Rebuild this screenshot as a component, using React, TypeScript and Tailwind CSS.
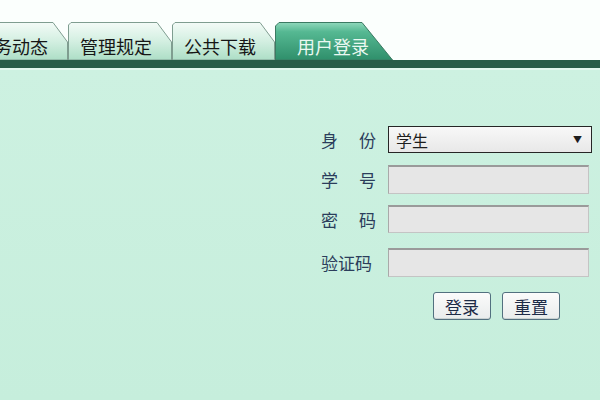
import React from 'react'

const cjk = '[font-family:"Noto_Sans_CJK_SC","Noto_Sans",sans-serif]'

function Tab({ label, width, active = false }: { label: string; width: number; active?: boolean }) {
  const h = 38
  const w = width
  // inactive tabs: cut top-right corner, active tab: long slope down to bar
  const points = active
    ? `0.5,${h} 0.5,4 4,0.5 ${w - 31},0.5 ${w - 0.5},${h}`
    : `0.5,${h} 0.5,3 3,0.5 ${w - 15},0.5 ${w - 0.5},20 ${w - 0.5},${h}`
  const id = active ? 'tabActive' : 'tabIdle'
  return (
    <div className={`relative h-[38px] shrink-0 ${active ? 'z-10' : ''}`} style={{ width: w }}>
      <svg className="absolute inset-0" width={w} height={h} viewBox={`0 0 ${w} ${h}`}>
        <defs>
          <linearGradient id={id} x1="0" y1="0" x2="0" y2="1">
            {active ? (
              <>
                <stop offset="0" stopColor="#8fd8bb" />
                <stop offset="0.25" stopColor="#55b892" />
                <stop offset="1" stopColor="#2f8f6b" />
              </>
            ) : (
              <>
                <stop offset="0" stopColor="#f3fbf7" />
                <stop offset="0.5" stopColor="#d3efe1" />
                <stop offset="1" stopColor="#addec6" />
              </>
            )}
          </linearGradient>
        </defs>
        <polygon points={points} fill={`url(#${id})`} stroke={active ? '#3b7a62' : '#7f9d90'} strokeWidth="1" />
      </svg>
      <span
        className={`relative flex h-full items-center pt-[9px] text-[18px] leading-none ${cjk} ${
          active ? 'pl-[22px] text-[#eaf8f1]' : 'pl-[12px] text-[#161616]'
        }`}
      >
        {label}
      </span>
    </div>
  )
}

function Field({ label, children, className = '' }: { label: React.ReactNode; children: React.ReactNode; className?: string }) {
  return (
    <div className={`flex items-center ${className}`}>
      <div className={`flex w-[55px] justify-between text-[17px] leading-none text-[#2b3d5b] ${cjk}`}>{label}</div>
      <div className="ml-[12px]">{children}</div>
    </div>
  )
}

function TextBox({ h }: { h: number }) {
  return (
    <div
      className="w-[201px] border border-[#c4c4c4] border-t-[2px] border-t-[#9a9a9a] border-l-[#a9a9a9] bg-[#e6e6e6]"
      style={{ height: h }}
    />
  )
}

function Btn({ children }: { children: React.ReactNode }) {
  return (
    <button
      className={`flex h-[28px] w-[58px] items-center justify-center rounded-[3px] border border-[#52707f] bg-gradient-to-b from-[#fbfbfb] to-[#e9ecec] text-[17px] leading-none text-[#1d2b47] shadow-[inset_0_-1px_0_#c9d1d1] ${cjk}`}
    >
      {children}
    </button>
  )
}

export default function App() {
  return (
    <div className="flex h-[400px] w-[600px] flex-col overflow-hidden bg-[#c8efdd]">
      {/* top white strip + tabs */}
      <div className="bg-[#fbfffd] pt-[22px]">
        <div className="ml-[-36px] flex">
          <Tab label="业务动态" width={104} />
          <Tab label="管理规定" width={104} />
          <Tab label="公共下载" width={103} />
          <Tab label="用户登录" width={118} active />
        </div>
      </div>
      <div className="h-[8px] bg-[#295c48]" />
      <div className="h-[2px] bg-[#e2f6ed]" />

      {/* login form */}
      <div className="flex flex-1 flex-col bg-gradient-to-b from-[#cdf1e1] to-[#c6eedc] pl-[321px] pt-[56px]">
        <Field label={<><span>身</span><span>份</span></>}>
          <div
            className={`flex h-[27px] w-[204px] items-center justify-between border-[1.5px] border-[#262626] bg-gradient-to-b from-[#f8f8f8] to-[#e8e8e8] pl-[7px] pr-[9px] text-[16px] leading-none text-[#1e1e1e] ${cjk}`}
          >
            <span>学生</span>
            <span className="text-[9px]">▼</span>
          </div>
        </Field>
        <Field label={<><span>学</span><span>号</span></>} className="mt-[12px]">
          <TextBox h={29} />
        </Field>
        <Field label={<><span>密</span><span>码</span></>} className="mt-[11px]">
          <TextBox h={28} />
        </Field>
        <Field label={<span>验证码</span>} className="mt-[15px]">
          <TextBox h={29} />
        </Field>
        <div className="ml-[112px] mt-[15px] flex gap-[11px]">
          <Btn>登录</Btn>
          <Btn>重置</Btn>
        </div>
      </div>
    </div>
  )
}
